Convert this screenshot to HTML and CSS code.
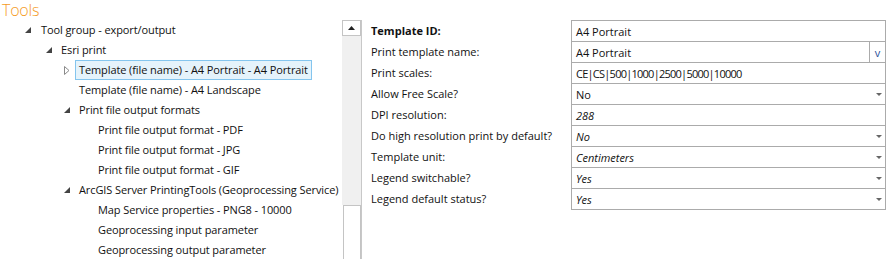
FILE: index.html
```html
<!DOCTYPE html>
<html>
<head>
<meta charset="utf-8">
<link rel="stylesheet" href="styles.css">
</head>
<body>
<div class="title">Tools</div>
<div class="main">
  <div class="tree-panel">
    <div class="tree">
      <div class="row l1"><span class="arr"><svg width="6" height="6" viewBox="0 0 6 6"><polygon points="6,0 6,6 0,6" fill="#444"/></svg></span><span class="txt">Tool group - export/output</span></div>
      <div class="row l2"><span class="arr"><svg width="6" height="6" viewBox="0 0 6 6"><polygon points="6,0 6,6 0,6" fill="#444"/></svg></span><span class="txt">Esri print</span></div>
      <div class="row l3"><span class="arr"><svg width="6" height="9" viewBox="0 0 6 9"><polygon points="0.5,0.5 5,4.5 0.5,8.5" fill="none" stroke="#8a8a8a" stroke-width="1"/></svg></span><span class="txt sel">Template (file name) - A4 Portrait - A4 Portrait</span></div>
      <div class="row l3"><span class="arr"></span><span class="txt">Template (file name) - A4 Landscape</span></div>
      <div class="row l3"><span class="arr"><svg width="6" height="6" viewBox="0 0 6 6"><polygon points="6,0 6,6 0,6" fill="#444"/></svg></span><span class="txt">Print file output formats</span></div>
      <div class="row l4"><span class="arr"></span><span class="txt">Print file output format - PDF</span></div>
      <div class="row l4"><span class="arr"></span><span class="txt">Print file output format - JPG</span></div>
      <div class="row l4"><span class="arr"></span><span class="txt">Print file output format - GIF</span></div>
      <div class="row l3"><span class="arr"><svg width="6" height="6" viewBox="0 0 6 6"><polygon points="6,0 6,6 0,6" fill="#444"/></svg></span><span class="txt">ArcGIS Server PrintingTools (Geoprocessing Service)</span></div>
      <div class="row l4"><span class="arr"></span><span class="txt">Map Service properties - PNG8 - 10000</span></div>
      <div class="row l4"><span class="arr"></span><span class="txt">Geoprocessing input parameter</span></div>
      <div class="row l4"><span class="arr"></span><span class="txt">Geoprocessing output parameter</span></div>
    </div>
    <div class="scrollbar">
      <div class="sb-up"><svg width="7" height="4" viewBox="0 0 7 4"><polygon points="0,4 3.5,0 7,4" fill="#222"/></svg></div>
      <div class="sb-track"></div>
      <div class="sb-thumb"></div>
    </div>
  </div>
  <div class="props">
    <div class="labels">
      <div class="lab bold">Template ID:</div>
      <div class="lab">Print template name:</div>
      <div class="lab">Print scales:</div>
      <div class="lab">Allow Free Scale?</div>
      <div class="lab">DPI resolution:</div>
      <div class="lab">Do high resolution print by default?</div>
      <div class="lab">Template unit:</div>
      <div class="lab">Legend switchable?</div>
      <div class="lab">Legend default status?</div>
    </div>
    <div class="values">
      <div class="val"><span class="vt">A4 Portrait</span></div>
      <div class="val"><span class="vt">A4 Portrait</span><span class="vbtn">v</span></div>
      <div class="val"><span class="vt scales">CE|CS|500|1000|2500|5000|10000</span></div>
      <div class="val"><span class="vt">No</span><span class="dd"></span></div>
      <div class="val"><span class="vt it">288</span></div>
      <div class="val"><span class="vt it">No</span><span class="dd"></span></div>
      <div class="val"><span class="vt it">Centimeters</span><span class="dd"></span></div>
      <div class="val"><span class="vt it">Yes</span><span class="dd"></span></div>
      <div class="val"><span class="vt it">Yes</span><span class="dd"></span></div>
    </div>
  </div>
</div>
</body>
</html>
```

FILE: styles.css
```css
html, body {
  margin: 0;
  padding: 0;
  background: #fff;
  overflow: hidden;
}
body {
  width: 888px;
  height: 259px;
  font-family: "Open Sans", "Noto Sans", sans-serif;
  font-size: 11px;
  color: #111;
}
.title {
  height: 20px;
  padding-left: 2px;
  font-size: 16px;
  line-height: 20px;
  color: #f59b26;
  font-weight: 300;
  letter-spacing: -0.2px;
}
.main {
  display: flex;
  height: 239px;
}
.tree-panel {
  width: 362px;
  display: flex;
  border-right: 1px solid #c8c8c8;
  box-sizing: border-box;
}
.tree {
  width: 341px;
  overflow: hidden;
  letter-spacing: -0.1px;
}
.row {
  height: 20px;
  display: flex;
  align-items: center;
  white-space: nowrap;
}
.row.l1 { padding-left: 25px; }
.row.l2 { padding-left: 46px; }
.row.l3 { padding-left: 64px; }
.row.l4 { padding-left: 83px; }
.arr {
  width: 14px;
  flex: none;
  display: flex;
  align-items: center;
}
.row.l1 .arr { width: 15px; }
.txt {
  padding: 0 3px;
  margin-left: -3px;
  line-height: 18px;
  border: 1px solid transparent;
}
.txt.sel {
  background: #e5f3fb;
  border-color: #84c5ee;
}
.scrollbar {
  width: 20px;
  display: flex;
  flex-direction: column;
  padding-left: 1px;
  box-sizing: border-box;
}
.sb-up {
  height: 16px;
  border: 1px solid #c4c4c4;
  background: #fff;
  box-sizing: border-box;
  display: flex;
  align-items: center;
  justify-content: center;
}
.sb-track {
  height: 169px;
  background: #f0f0f0;
}
.sb-thumb {
  flex: 1;
  margin-left: 1px;
  border: 1px solid #c4c4c4;
  border-bottom: none;
  background: #fff;
}
.props {
  display: flex;
  padding-left: 9px;
}
.labels {
  width: 200px;
}
.lab {
  height: 21px;
  line-height: 22px;
  white-space: nowrap;
}
.lab.bold { font-weight: 700; }
.values {
  width: 315px;
  border: 1px solid #ababab;
  box-sizing: border-box;
  align-self: flex-start;
}
.val {
  height: 21px;
  border-top: 1px solid #ababab;
  box-sizing: border-box;
  display: flex;
  align-items: center;
}
.val:first-child { border-top: none; height: 20px; }
.vt {
  flex: 1;
  padding-left: 4px;
  white-space: nowrap;
}
.vt.it { font-style: italic; }
.vt.scales { letter-spacing: -0.75px; }
.vbtn {
  width: 15px;
  height: 100%;
  border-left: 1px solid #ababab;
  display: flex;
  align-items: center;
  justify-content: center;
  color: #2a4f9a;
  font-size: 11px;
}
.dd {
  width: 0;
  height: 0;
  border-left: 3px solid transparent;
  border-right: 3px solid transparent;
  border-top: 3px solid #666;
  margin-right: 3px;
}
```
